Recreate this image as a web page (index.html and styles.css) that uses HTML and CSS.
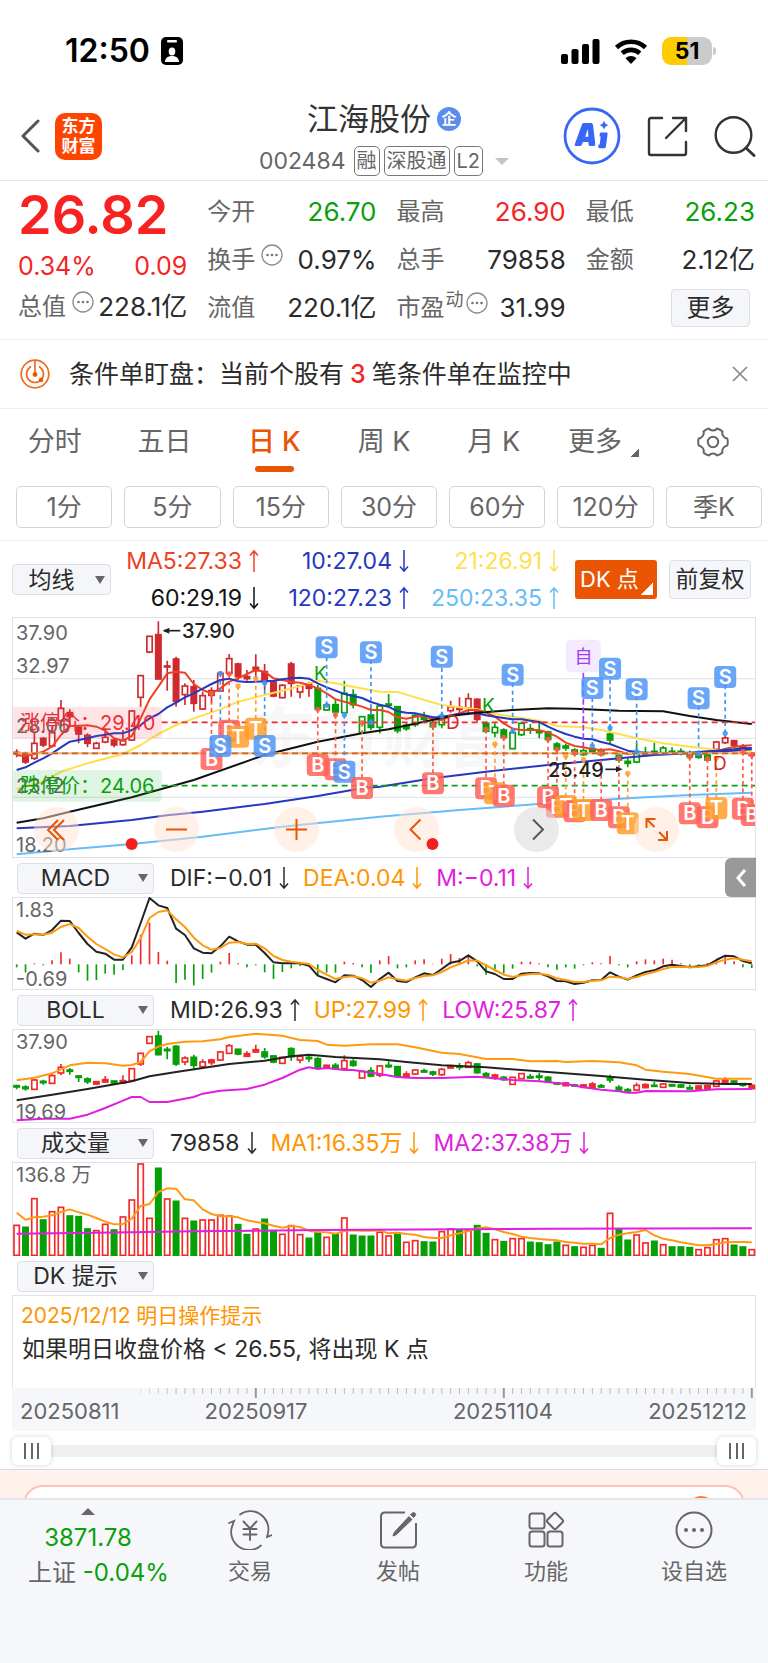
FILE: index.html
```html
<!DOCTYPE html>
<html lang="zh-CN">
<head>
<meta charset="utf-8">
<meta name="viewport" content="width=device-width, initial-scale=1">
<title>江海股份 002484</title>
<link rel="stylesheet" href="styles.css">
</head>
<body>
<svg class="defs" aria-hidden="true">
  <symbol id="down" viewBox="0 0 10 24"><path d="M5 1v21M1 17.500l4 4.500 4-4.500" fill="none" stroke="currentColor" stroke-width="1.500"/></symbol>
  <symbol id="up" viewBox="0 0 10 24"><path d="M5 23V2M1 6.500L5 2l4 4.500" fill="none" stroke="currentColor" stroke-width="1.500"/></symbol>
  <symbol id="info" viewBox="0 0 22 22"><circle cx="11" cy="11" r="10" fill="none" stroke="#8a8a8a" stroke-width="1.300"/><g fill="#777"><circle cx="6.500" cy="11" r="1.300"/><circle cx="11" cy="11" r="1.300"/><circle cx="15.500" cy="11" r="1.300"/></g></symbol>
</svg>

<div class="status">
  <span class="clock">12:50</span>
  <svg width="22" height="28" viewBox="0 0 22 28"><rect width="22" height="28" rx="5"/><rect x="6" y="3" width="10" height="2.500" rx="1.200" fill="#fff"/><ellipse cx="11" cy="14.500" rx="3.300" ry="4" fill="#fff"/><path d="M4 25c0-4 3-6 7-6s7 2 7 6z" fill="#fff"/></svg>
  <span class="grow"></span>
  <svg width="39" height="25" viewBox="0 0 39 25"><rect y="15" width="7" height="10" rx="2"/><rect x="10.500" y="10" width="7" height="15" rx="2"/><rect x="21" y="5" width="7" height="20" rx="2"/><rect x="31.500" width="7" height="25" rx="2"/></svg>
  <svg class="wifi" width="34" height="25" viewBox="0 0 34 25"><path d="M2.500 8.500a21 21 0 0 1 29 0M8.200 14.300a13 13 0 0 1 17.600 0" fill="none" stroke="#000" stroke-width="4.600"/><path d="M17 25l-5.500-5.700a8 8 0 0 1 11 0z"/></svg>
  <span class="battery">51</span>
</div>

<header class="head">
  <div class="head-left">
    <button class="icon-btn" aria-label="返回"><svg width="20" height="34" viewBox="0 0 20 34"><path d="M18 2L3 17l15 15" fill="none" stroke="#555" stroke-width="3" stroke-linecap="round" stroke-linejoin="round"/></svg></button>
    <a class="logo" href="#">东方<br>财富</a>
  </div>
  <div class="head-mid">
    <h1>江海股份<span class="corp">企</span></h1>
    <p class="code"><span class="num">002484</span><span class="tag">融</span><span class="tag">深股通</span><span class="tag">L2</span><i class="caret"></i></p>
  </div>
  <div class="head-right">
    <button class="icon-btn" aria-label="Ai"><svg width="58" height="58" viewBox="0 0 58 58"><circle cx="29" cy="29" r="27" fill="none" stroke="#3866f6" stroke-width="2.800"/><path d="M20.500 16h7.500q1.800 0 2 1.800l2.300 19.200q.2 2-1.800 2h-3.200q-1.500 0-1.700-1.500l-.3-2.500h-5.300l-1.200 2.800q-.5 1.200-2 1.200h-3.500q-2.200 0-1.400-2l7-19.500q.5-1.500 1.600-1.500zM24.800 22l-2.600 7.800h3.200z" fill="#3866f6"/><path d="M38 25.500h5.500q1.300 0 1.100 1.300l-1.700 13q-.2 1.400-1.600 1.400h-4.800q-1.400 0-1.200-1.400l.3-2.400h1.100l1-8h-1.200l.3-2.600q.1-1.300 1.200-1.300z" fill="#3866f6"/><path d="M41 13.500q1 4 4.500 4.500-3.500 1-4.500 4.500-1-3.500-4.500-4.500 3.500-.5 4.500-4.500z" fill="#3866f6"/></svg></button>
    <button class="icon-btn" aria-label="分享"><svg width="41" height="41" viewBox="0 0 41 41"><g fill="none" stroke="#333" stroke-width="2.400" stroke-linecap="round"><path d="M15 2H4q-2 0-2 2v33q0 2 2 2h33q2 0 2-2V26M26 2h13v13M38 3L19 22"/></g></svg></button>
    <button class="icon-btn" aria-label="搜索"><svg width="42" height="42" viewBox="0 0 42 42"><circle cx="19.500" cy="20" r="17.800" fill="none" stroke="#333" stroke-width="2.400"/><path d="M32 33l8 7.500" stroke="#333" stroke-width="2.800" stroke-linecap="round"/></svg></button>
  </div>
</header>

<section class="quote">
  <div class="col first">
    <strong class="price">26.82</strong>
    <div class="cell change red"><span>0.34%</span><span>0.09</span></div>
    <div class="cell third"><span class="lbl">总值<svg class="info"><use href="#info"/></svg></span><span>228.1亿</span></div>
  </div>
  <div class="col">
    <div class="cell"><span class="lbl">今开</span><span class="green">26.70</span></div>
    <div class="cell"><span class="lbl">换手<svg class="info"><use href="#info"/></svg></span><span>0.97%</span></div>
    <div class="cell"><span class="lbl">流值</span><span>220.1亿</span></div>
  </div>
  <div class="col">
    <div class="cell"><span class="lbl">最高</span><span class="red">26.90</span></div>
    <div class="cell"><span class="lbl">总手</span><span>79858</span></div>
    <div class="cell"><span class="lbl">市盈<small>动</small><svg class="info tight"><use href="#info"/></svg></span><span>31.99</span></div>
  </div>
  <div class="col">
    <div class="cell"><span class="lbl">最低</span><span class="green">26.23</span></div>
    <div class="cell"><span class="lbl">金额</span><span>2.12亿</span></div>
    <div class="cell end"><button class="soft more">更多</button></div>
  </div>
</section>

<section class="notice">
  <svg width="30" height="30" viewBox="0 0 30 30"><g fill="none" stroke="#f0691e" stroke-width="1.700"><circle cx="15" cy="15" r="13.800"/><path d="M11 7.500a8.500 8.500 0 1 0 8 0M15 1v14"/></g><circle cx="15" cy="15.500" r="2.400" fill="#ea5504"/><circle cx="21" cy="21" r="2.200" fill="#ea5504"/></svg>
  <p>条件单盯盘：当前个股有<b>3</b>笔条件单在监控中</p>
  <button class="icon-btn" aria-label="关闭"><svg width="16" height="16" viewBox="0 0 16 16"><path d="M1 1l14 14M15 1L1 15" stroke="#888" stroke-width="1.700"/></svg></button>
</section>

<nav class="tabs">
  <button>分时</button><button>五日</button><button class="on">日 K</button><button>周 K</button><button>月 K</button>
  <button>更多<i class="corner"></i></button>
  <button aria-label="设置"><svg width="32" height="32" viewBox="0 0 32 32"><g fill="none" stroke="#666" stroke-width="2"><path d="M12 2.500q1 2 4 2t4-2q3.500 1 5.500 3-.8 2.500.8 4.500 1.500 2.300 4 2.500 1 3.500 0 7-2.500.3-4 2.500-1.600 2.200-.8 4.500-2.200 2.200-5.500 3-1.500-2-4-2t-4 2q-3.500-.9-5.500-3 .8-2.500-.8-4.500-1.500-2.200-4-2.500-1-3.500 0-7 2.500-.3 4-2.500 1.600-2.200.8-4.500 2.300-2.200 5.500-3z" stroke-linejoin="round"/><circle cx="16" cy="16" r="5.200"/></g></svg></button>
</nav>
<div class="chips">
  <button>1分</button><button>5分</button><button>15分</button><button>30分</button><button>60分</button><button>120分</button><button>季K</button>
</div>

<section class="ma">
  <span class="pick small"><select aria-label="主图指标"><option>均线</option></select></span>
  <div class="ma-grid">
    <span class="c1">MA5:27.33<svg class="arr"><use href="#up"/></svg></span><span class="c2">10:27.04<svg class="arr"><use href="#down"/></svg></span><span class="c3">21:26.91<svg class="arr"><use href="#down"/></svg></span>
    <span class="c4">60:29.19<svg class="arr"><use href="#down"/></svg></span><span class="c2">120:27.23<svg class="arr"><use href="#up"/></svg></span><span class="c5">250:23.35<svg class="arr"><use href="#up"/></svg></span>
  </div>
  <button class="dk">DK 点</button>
  <button class="soft adj">前复权</button>
</section>

<main class="charts">
  <div class="plot">
    <svg id="kline" viewBox="0 0 744 241"></svg>
    <div class="tools">
      <button aria-label="最左"><svg viewBox="0 0 45 45"><path d="M24 13l-10 10 10 10M30 13L20 23l10 10"/></svg></button>
      <button aria-label="缩小"><svg viewBox="0 0 45 45"><path d="M12 22.500h21"/></svg></button>
      <button aria-label="放大"><svg viewBox="0 0 45 45"><path d="M12 22.500h21M22.500 12v21"/></svg></button>
      <button aria-label="左移"><svg viewBox="0 0 45 45"><path d="M26.500 12.500l-10 10 10 10"/><circle class="dot" cx="38.500" cy="37" r="6"/></svg></button>
      <button class="off" aria-label="右移"><svg viewBox="0 0 45 45"><path d="M19 12.500l10 10-10 10"/></svg></button>
      <button aria-label="全屏"><svg viewBox="0 0 45 45"><path d="M12.500 21v-9h9M12.500 12l8 8M24 33h9v-9M33 33l-8-8"/></svg></button>
    </div>
  </div>
  <div class="bar">
    <span class="pick"><select aria-label="指标一"><option>MACD</option></select></span>
    <span>DIF:−0.01<svg class="arr"><use href="#down"/></svg></span><span class="or">DEA:0.04<svg class="arr"><use href="#down"/></svg></span><span class="mg">M:−0.11<svg class="arr"><use href="#down"/></svg></span>
    <button class="fold" aria-label="展开"><svg width="12" height="20" viewBox="0 0 12 20"><path d="M10 2L3 10l7 8" fill="none" stroke="#fff" stroke-width="3"/></svg></button>
  </div>
  <svg id="macd" viewBox="0 0 744 93"></svg>
  <div class="bar">
    <span class="pick"><select aria-label="指标二"><option>BOLL</option></select></span>
    <span>MID:26.93<svg class="arr"><use href="#up"/></svg></span><span class="or">UP:27.99<svg class="arr"><use href="#up"/></svg></span><span class="mg">LOW:25.87<svg class="arr"><use href="#up"/></svg></span>
  </div>
  <svg id="boll" viewBox="0 0 744 94"></svg>
  <div class="bar">
    <span class="pick"><select aria-label="指标三"><option>成交量</option></select></span>
    <span>79858<svg class="arr"><use href="#down"/></svg></span><span class="or">MA1:16.35万<svg class="arr"><use href="#down"/></svg></span><span class="mg">MA2:37.38万<svg class="arr"><use href="#down"/></svg></span>
  </div>
  <svg id="vol" viewBox="0 0 744 94"></svg>
  <div class="bar">
    <span class="pick"><select aria-label="指标四"><option>DK 提示</option></select></span>
  </div>
  <div class="tip">
    <p class="or">2025/12/12 明日操作提示</p>
    <p>如果明日收盘价格 &lt; 26.55, 将出现 K 点</p>
  </div>
  <svg id="axis" viewBox="0 0 744 43"></svg>
  <div class="range">
    <input type="range" aria-label="起始日期" min="0" max="100" value="0">
    <input type="range" aria-label="结束日期" min="0" max="100" value="100">
  </div>
</main>

<div class="promo"><div class="promo-card"><i></i></div></div>

<footer class="dock">
  <a class="index" href="#"><i></i><span class="green">3871.78</span><span class="board">上证 <em>-0.04%</em></span></a>
  <a href="#"><svg width="44" height="40" viewBox="0 0 44 40"><g fill="none" stroke="#666" stroke-width="1.800" stroke-linecap="round"><path d="M12 4.500A18 18 0 0 1 40 23q-.5 2-1 4l5-2M33 35.500A18 18 0 0 1 5 14q.5-2 1-3L1 13"/><path d="M15.500 11.500l6.500 7 6.500-7M15.500 19h13M15.500 24.500h13M22 19v11" stroke-width="1.900"/></g></svg>交易</a>
  <a href="#"><svg width="40" height="40" viewBox="0 0 40 40"><path d="M27 2.500H7q-4 0-4 4v27q0 4 4 4h27q4 0 4-4V13" fill="none" stroke="#666" stroke-width="2"/><path d="M31 6.500l3 3L19 24q-2 1.500-4 2 .3-2.500 2-4.500zM34.500 3q1.200-1 2.500.2t.3 2.500L35.500 7.500l-3-3z" fill="#666" stroke="#666"/></svg>发帖</a>
  <a href="#"><svg width="40" height="40" viewBox="0 0 40 40"><g fill="none" stroke="#666" stroke-width="2"><rect x="3.500" y="3.500" width="15" height="15" rx="2.500"/><rect x="3.500" y="21.500" width="15" height="15" rx="2.500"/><rect x="21.500" y="21.500" width="15" height="15" rx="2.500"/><path d="M27.700 3.500q1.300-1.300 2.600 0l6.200 6.300q1.300 1.200 0 2.500l-6.200 6.200q-1.300 1.300-2.600 0l-6.200-6.200q-1.300-1.300 0-2.500z"/></g></svg>功能</a>
  <a href="#"><svg width="40" height="40" viewBox="0 0 40 40"><circle cx="20" cy="20" r="17.500" fill="none" stroke="#666" stroke-width="2"/><g fill="#666"><circle cx="12" cy="20" r="2"/><circle cx="20" cy="20" r="2"/><circle cx="28" cy="20" r="2"/></g></svg>设自选</a>
</footer>
<script src="charts.js"></script>
</body>
</html>
```

FILE: styles.css
```css
* { box-sizing: border-box; margin: 0; padding: 0; }
body { font-family: Inter, "Noto Sans CJK SC", sans-serif; font-size: 24px; line-height: 32px; color: #2b2b2b; background: #fff; }
button, select { font: inherit; color: inherit; border: 0; background: none; }
a { color: inherit; text-decoration: none; }
svg { display: block; flex: none; }
.defs { position: absolute; width: 0; height: 0; }
.grow { flex: 1; }
.red { color: #f32525; }
.green, .index em { color: #0aa00a; font-style: normal; }
.or { color: #ff9500; }
.mg { color: #e01ee0; }
.icon-btn { display: flex; }

.status { display: flex; align-items: center; height: 102px; padding: 0 56px 0 65px; }
.clock { font-size: 32px; font-weight: 600; color: #000; margin-right: 11px; }
.wifi { margin: 0 14px; }
.battery { position: relative; width: 50px; height: 28px; line-height: 28px; border-radius: 9px; text-align: center; font-size: 23px; font-weight: 700; color: #000; background: linear-gradient(90deg, #ffcc00 51%, #cbcbcb 51%); }
.battery::after { content: ""; position: absolute; right: -4px; top: 10px; width: 3px; height: 8px; border-radius: 0 3px 3px 0; background: #cbcbcb; }

.head { display: grid; grid-template-columns: 1fr auto 1fr; padding: 0 12px; height: 79px; border-bottom: 1px solid #e6e6e6; }
.head-left, .head-right { display: flex; align-items: center; padding-bottom: 10px; }
.head-left { gap: 15px; padding-left: 8px; }
.head-right { justify-content: flex-end; gap: 26px; }
.logo { width: 47px; height: 47px; border-radius: 10px; background: #ff4400; color: #fff; font-size: 17px; font-weight: 700; line-height: 20px; text-align: center; padding-top: 3px; }
.head-mid { text-align: center; color: #333; }
h1 { display: flex; align-items: center; justify-content: center; gap: 6px; font-size: 31px; line-height: 34px; font-weight: 400; }
.corp { width: 24px; height: 24px; border-radius: 50%; background: #5b8def; color: #fff; font-size: 15px; line-height: 23px; font-weight: 700; }
.code { display: flex; align-items: center; gap: 4px; margin-top: 10px; color: #666; font-size: 23px; line-height: 30px; }
.num { margin-right: 4px; }
.tag { height: 30px; border: 1px solid #777; border-radius: 5px; padding: 0 2px; font-size: 20px; line-height: 28px; }
.caret { margin-left: 8px; border: 7px solid transparent; border-top-color: #c4c4c4; border-bottom: 0; }

.quote { display: grid; grid-template-columns: repeat(4, 1fr); gap: 20px; padding: 7px 13px 7px 18px; border-bottom: 1px solid #efefef; }
.cell { display: flex; align-items: center; justify-content: space-between; height: 48px; white-space: nowrap; font-size: 26px; }
.change { font-size: 25px; }
.third { height: 34px; }
.end { justify-content: flex-end; padding-right: 5px; }
.lbl { display: flex; align-items: center; color: #666; font-size: 24px; }
.lbl small { font-size: 18px; margin: 0 1px 16px; }
.info { width: 22px; height: 22px; margin: 0 0 10px 6px; }
.tight { margin-left: 1px; }
.first .info { margin-right: -4px; }
.price { display: block; font-size: 54px; line-height: 54px; font-weight: 600; color: #f82222; }
.soft { border: 1px solid #dcdfe6; border-radius: 4px; background: #f5f6fa; white-space: nowrap; }
.more { width: 79px; height: 38px; font-size: 24px; line-height: 34px; }

.notice { display: flex; align-items: center; height: 69px; padding: 0 20px; border-bottom: 1px solid #efefef; font-size: 25px; }
.notice p { flex: 1; margin-left: 19px; white-space: nowrap; }
.notice b { color: #f32525; font-weight: 500; margin: 0 6px; }

.tabs { display: grid; grid-template-columns: repeat(7, 1fr); height: 66px; font-size: 27px; color: #666; }
.tabs button { position: relative; display: flex; align-items: center; justify-content: center; white-space: nowrap; }
.tabs .on { color: #ea5504; font-weight: 500; }
.tabs .on::after { content: ""; position: absolute; bottom: 3px; width: 39px; height: 6px; border-radius: 3px; background: #ea5504; }
.corner { align-self: flex-end; margin: 0 0 18px 9px; width: 8px; height: 8px; background: linear-gradient(135deg, transparent 50%, #666 50%); }
.chips { display: flex; gap: 12px; padding: 11px 6px 12px 16px; border-bottom: 1px solid #efefef; }
.chips button { flex: 1; height: 42px; border: 1px solid #d4d4d4; border-radius: 5px; font-size: 25px; line-height: 38px; color: #666; }

.ma { display: flex; align-items: center; height: 76px; padding: 0 17px 0 12px; }
.ma-grid { flex: 1; display: grid; grid-template-columns: 148px 1fr 150px; row-gap: 5px; justify-items: end; padding: 0 16px 0 0; font-size: 23px; }
.ma-grid span { display: flex; align-items: center; white-space: nowrap; }
.arr { width: 10px; height: 24px; margin-left: 7px; }
.c1 { color: #ef4123; } .c2 { color: #2438c0; } .c3 { color: #ffdf4d; } .c4 { color: #111; } .c5 { color: #66bdf7; }
.dk { position: relative; width: 82px; height: 39px; border-radius: 3px; background: linear-gradient(135deg, transparent 50%, #fff 50%) right 4px bottom 4px / 12px 12px no-repeat #ea5504; color: #fff; text-align: left; padding-left: 5px; white-space: nowrap; font-size: 22px; }
.adj { width: 82px; height: 39px; margin-left: 12px; font-size: 23px; }
.pick { position: relative; display: block; width: 137px; height: 31px; flex: none; }
.pick select { width: 100%; height: 100%; appearance: none; border: 1px solid #dcdfe6; border-radius: 4px; background: #f5f6fa; padding-right: 20px; text-align: center; text-align-last: center; font-size: 23px; line-height: 28px; }
.pick::after { content: ""; position: absolute; right: 6px; top: 12px; border: 5px solid transparent; border-top: 8px solid #666; border-bottom: 0; }
.small { width: 99px; }

.charts { padding: 0 12px; }
.charts > svg, .plot > svg { width: 100%; height: auto; overflow: hidden; }
.plot { position: relative; }
.tools { position: absolute; left: 3%; right: 10.4%; bottom: 6px; display: flex; justify-content: space-between; }
.tools button { width: 45px; height: 45px; border-radius: 50%; background: rgba(255, 226, 210, .5); }
.tools svg { fill: none; stroke: #ea5504; stroke-width: 2; overflow: visible; }
.tools .off { background: rgba(220, 220, 220, .6); }
.tools .off svg { stroke: #555; }
.tools .dot { fill: #f32020; stroke: none; }
.bar { display: flex; align-items: center; height: 39px; padding-left: 5px; font-size: 23px; gap: 16px; white-space: nowrap; }
.bar > span { display: flex; align-items: center; }
.bar > .pick { display: block; }
.bar > .or, .bar > .mg { margin-left: -2px; }
.fold { margin-left: auto; width: 31px; height: 39px; border-radius: 6px 0 0 6px; background: #999; display: flex; align-items: center; justify-content: center; }
.tip { height: 93px; border: 1px solid #e3e3e6; border-bottom: 0; padding: 4px 8px; }
.tip p { font-size: 23px; line-height: 35px; padding-left: 1px; }
.tip .or { font-size: 21px; line-height: 32px; padding-left: 0; }
.range { position: relative; height: 38px; }
.range::before { content: ""; position: absolute; left: 0; right: 0; top: 14px; height: 12px; background: #f0f0f2; }
.range input { position: absolute; left: 0; top: 5px; width: 100%; height: 30px; appearance: none; background: none; pointer-events: none; }
.range input::-webkit-slider-thumb { appearance: none; width: 39px; height: 28px; border-radius: 6px; box-shadow: 0 0 5px rgba(0, 0, 0, .18); pointer-events: auto; background: linear-gradient(#666, #666) 12px 6px / 2px 16px no-repeat, linear-gradient(#666, #666) 19px 6px / 2px 16px no-repeat, linear-gradient(#666, #666) 25px 6px / 2px 16px no-repeat #fff; }

.promo { height: 29px; padding: 15px 23px 0; border-top: 1px solid #d9d9de; background: #fff1ec; overflow: hidden; }
.promo-card { position: relative; height: 60px; border: 2px solid #ffc0b6; border-radius: 20px; background: #fff; }
.promo-card i { position: absolute; right: 28px; top: 9px; width: 28px; height: 28px; border-radius: 50%; background: #ff7d2e; }

.dock { display: grid; grid-template-columns: 176px repeat(4, 1fr); height: 165px; padding-top: 8px; border-top: 2px solid #e4e6ea; background: #f6f7fa; color: #666; }
.dock a { display: flex; flex-direction: column; align-items: center; font-size: 22px; gap: 5px; white-space: nowrap; }
.dock svg { margin-top: 2px; }
.dock .index { font-size: 24px; gap: 0; }
.index i { border: 7px solid transparent; border-top: 0; border-bottom: 7px solid #666; }
.index .green { margin: 7px 0 3px; }
.board { align-self: flex-start; padding-left: 28px; }

.grey { fill: #666; }
```

FILE: charts.js
```js
const N = 84;
const RED = '#cf2a2f', BRIGHT = '#f22a2a', GREEN = '#06a006';
const X = i => 14 + 26.57 * i;

// Draws a polyline through sparse index:value pairs.
const line = (pairs, color, w = 6) => {
  const pts = pairs.trim().split(/\s+/).map(p => p.split(':').map(Number));
  return `<polyline points="${pts.map(([i, y]) => X(i) + ',' + y).join(' ')}" fill="none" stroke="${color}" stroke-width="${w}" stroke-linejoin="round"/>`;
};
const dense = (list, color, w) => line(list.trim().split(/\s+/).map((v, i) => i + ':' + v).join(' '), color, w);

// Each candle: kind high top bottom low. Upper-case kinds are filled.
const candles = (text, red) => text.trim().split('|').map((row, i) => {
  const [k, h, t, b, l] = row.trim().split(/\s+/).map((v, n) => n ? +v : v);
  const c = k.toLowerCase() === 'r' ? red : GREEN, x = X(i), solid = k === k.toUpperCase();
  return `<path d="M${x} ${h}V${t}M${x} ${b}V${l}" stroke="${c}" stroke-width="5"/>` +
    `<rect x="${x - 8}" y="${t}" width="16" height="${Math.max(b - t, 3)}" fill="${solid ? c : '#fff'}" stroke="${c}" stroke-width="5"/>`;
}).join('');

const scaled = (top, body) => `<g transform="scale(.33333) translate(0 ${-top})">${body}</g>`;
const frame = h => `<rect x=".5" y=".5" width="743" height="${h - 1}" fill="none" stroke="#e0e1e8"/>`;
const text = (x, y, s, size = 20, extra = 'class="grey"') => `<text x="${x}" y="${y}" font-size="${size}" ${extra}>${s}</text>`;
const put = (id, body) => { document.getElementById(id).innerHTML = body; };

/* K line */
const kData = `R 418 427 432 442|R 425 432 456 462|r 366 400 445 450|R 382 385 405 412|r 350 368 408 412|r 270 295 332 345|R 298 308 320 350|R 345 352 372 400|R 370 376 400 412|r 395 400 415 417|r 355 382 396 400|R 385 390 405 412|r 360 392 404 408|r 300 303 390 392|r 194 197 262 290|r 77 79 126 130|R 34 74 207 208|R 152 168 170 242|R 140 147 274 290|r 220 228 254 285|R 210 230 280 305|r 245 257 297 300|R 232 242 256 280|r 185 190 243 246|r 132 146 190 195|R 158 162 200 210|R 180 200 206 212|R 133 172 182 215|R 162 185 215 240|R 212 216 258 262|r 222 226 263 265|R 155 162 220 260|r 225 228 246 265|R 215 222 235 260|G 225 235 297 300|g 280 285 300 303|G 268 284 306 318|g 212 250 308 310|G 238 254 284 295|g 318 320 368 370|G 290 315 352 360|g 285 288 352 370|G 252 282 286 292|G 288 290 362 370|G 340 346 356 362|g 312 316 344 350|G 305 322 328 340|G 320 338 350 360|g 305 318 344 355|r 272 290 302 308|R 262 292 298 310|r 250 266 294 315|R 265 268 328 335|G 335 340 364 370|g 340 352 368 382|G 355 360 382 388|g 362 368 416 418|g 335 340 374 378|G 342 356 360 372|G 335 364 368 385|G 362 366 388 396|G 396 402 418 428|G 402 408 414 422|G 415 420 432 438|g 415 422 434 438|G 412 416 426 428|G 415 420 434 438|G 345 372 390 400|G 428 436 450 458|G 445 454 460 472|g 400 430 456 460|G 410 428 434 440|G 398 424 430 436|g 408 414 428 436|G 412 424 428 434|G 415 424 430 436|G 422 430 440 448|G 430 434 442 446|G 425 430 450 455|r 392 396 418 425|r 375 384 398 402|R 390 392 406 410|R 402 410 430 432|R 425 430 436 448`;

const ma5 = `436 438 432 425 410 375 348 347 346 350 362 385 392 378 325 268 230 190 185 188 222 240 250 235 215 205 192 180 185 205 210 216 218 225 235 250 268 275 282 290 300 300 306 322 326 320 318 328 330 318 310 300 300 308 320 340 356 360 360 360 368 380 398 408 412 418 420 418 424 432 428 432 430 432 430 428 430 432 430 425 416 411 407 406`;
const ma10 = `480 472 458 445 430 412 395 390 385 378 374 370 370 360 345 325 312 292 278 262 250 236 222 210 206 214 216 215 214 212 208 205 203 206 220 232 242 252 258 264 276 284 290 304 308 310 316 322 322 316 312 310 310 316 320 324 328 328 332 336 350 362 372 380 386 388 396 402 412 422 426 428 428 430 430 428 428 426 424 422 420 418 415 414`;

const cut = (y, c, x0 = 449) => `<path d="M${x0} ${y}H2232" stroke="${c}" stroke-width="5" stroke-dasharray="18 12"/>`;
const kinds = { S: ['#4f97f8', '#4093f5'], B: ['#ff6157', '#ff5a45'], T: ['#ff9e2c', '#ff9e2c'] };
const marks = `B22:250:447 B24:192:362 T25:228:380 T27:205:356 S23:190:408 S28:218:408 S35:286:112 B34:298:465 B36:314:478 S37:314:485 S40:338:127 B39:338:534 S48:318:140 B47:346:520 B53:358:535 T54:402:550 B55:382:557 S56:364:194 B60:388:562 B61:418:590 T62:438:588 B63:428:604 T64:448:600 S65:408:234 B66:428:600 S67:354:176 B68:444:622 T69:490:640 S70:425:238 B76:440:610 S77:432:265 B78:446:622 T79:445:595 S80:370:201 B82:425:596 B83:435:615`
  .split(' ').map(m => { const [a, d, y] = m.split(':'); return { k: a[0], i: +a.slice(1), d: +d, y: +y }; });
const stems = marks.map(({ k, i, d, y }) => `<path d="M${X(i)} ${d}V${y}" stroke="${kinds[k][1]}" stroke-width="5" stroke-dasharray="12 10"/><circle cx="${X(i)}" cy="${d}" r="8" fill="${kinds[k][1]}" opacity=".85"/>`).join('');
const badges = marks.map(({ k, i, y }) => {
  const x = X(i) / 3, v = (y - 21) / 3;
  return `<rect x="${x - 11}" y="${v - 11}" width="22" height="22" rx="4" fill="${kinds[k][0]}" opacity=".85"/><text x="${x}" y="${v + 7}" font-size="20" font-weight="600" fill="#fff" text-anchor="middle">${k}</text>`;
}).join('');

put('kline',
  text(238, 145, '东方财富', 66, 'fill="#f7f7f8" font-weight="700"') +
  scaled(21,
    [206, 385, 562].map(y => `<path d="M0 ${y}H2232" stroke="#e4e6ee" stroke-width="4"/>`).join('') +
    candles(kData, RED) +
    line('0:538 1:528 3:515 5:485 8:460 12:432 14:405 16:372 18:345 20:325 23:298 25:275 28:255 30:242 32:228 34:212 36:220 38:230 41:245 43:246 44:254 46:270 48:285 50:292 52:298 54:312 57:324 59:332 61:348 64:352 66:360 68:372 70:385 73:400 76:410 78:416 79:420 81:424 83:422', '#ffdf4d') +
    dense(ma5, '#ef4123') + dense(ma10, '#2438c0') +
    line('0:638 3:625 6:605 13:562 20:510 28:435 34:395 39:370 42:358 46:335 49:318 52:308 56:300 60:295 63:296 68:302 73:304 76:318 79:330 83:342', '#111') +
    line('0:655 6:648 13:630 17:616 21:605 28:582 34:558 39:535 41:530 47:505 53:485 60:465 66:450 72:435 76:430 80:424 83:418', '#2438c0') +
    line('0:733 6:718 13:702 21:680 30:650 41:620 50:600 60:580 70:563 76:555 83:548', '#66bdf7') +
    '<rect x="0" y="290" width="449" height="95" rx="10" fill="#f8404d" opacity=".14"/><rect x="0" y="480" width="449" height="95" rx="10" fill="#20b030" opacity=".14"/>' +
    cut(337, '#f02a30') + cut(527, '#0aa01a') +
    '<path d="M0 430H2232" stroke="#f0b27a" stroke-width="6"/>' + cut(430, '#c8641c', 0) +
    stems +
    '<path d="M1714 188V410" stroke="#a33df5" stroke-width="5" stroke-dasharray="18 8"/><rect x="1662" y="89" width="104" height="98" rx="14" fill="#f3eafe"/>' +
    '<path d="M505 62H456" stroke="#222" stroke-width="5"/><path d="M452 62l20-9v18zM1832 478l-20-9v18z" fill="#222"/><path d="M1780 478H1820" stroke="#222" stroke-width="5"/>' +
    '<circle cx="359" cy="702" r="18" fill="#f32020"/>') +
  badges +
  text(571.5, 46, '自', 18, 'fill="#a33df5" text-anchor="middle"') +
  text(4, 23, '37.90') + text(4, 56, '32.97') + text(4, 116, '28.06') + text(4, 176, '23.12') + text(4, 235, '18.20') +
  text(8, 113, '涨停价：29.40', 20, 'fill="#f32a35"') + text(8, 176, '跌停价：24.06', 20, 'fill="#08a010"') +
  text(170, 21, '37.90', 20, 'fill="#222" font-weight="500"') + text(536, 160, '25.49', 20, 'fill="#222" font-weight="500"') +
  text(302, 63, 'K', 19, 'fill="#06a006"') + text(470, 95, 'K', 19, 'fill="#06a006"') +
  text(434, 112, 'D', 19, 'fill="#cf2a2f"') + text(701, 153, 'D', 19, 'fill="#cf2a2f"') + frame(241));

/* MACD: values above 329 on screen rise from the zero line, the rest hang below. */
const hist = '338 353 326 332 317 293 312 353 378 376 357 360 346 302 240 204 292 318 385 375 392 373 354 321 295 326 338 332 353 373 352 341 334 333 363 354 354 321 325 338 355 317 304 341 338 317 314 327 312 298 310 302 335 360 350 356 342 321 321 326 338 345 338 342 332 323 326 304 332 338 320 314 317 312 315 326 336 332 325 316 306 320 338 340'.split(' ').map(Number);
put('macd', frame(93) + scaled(127,
  hist.map((v, i) => `<path d="M${X(i)} 329V${v}" stroke="${v < 329 ? BRIGHT : GREEN}" stroke-width="5"/>`).join('') +
  dense('233 252 237 241 226 198 199 235 268 291 297 315 315 278 205 130 152 160 222 241 281 294 296 275 246 260 270 270 295 323 326 326 326 333 363 373 383 362 363 376 397 373 354 379 382 368 356 361 343 324 319 302 320 350 358 373 373 357 355 356 365 379 380 388 384 377 376 353 366 375 362 352 347 335 330 334 338 335 332 316 303 305 319 326', '#222', 6) +
  dense('229 240 239 240 234 217 208 220 246 268 283 299 308 292 250 190 172 167 194 217 249 272 285 280 264 262 268 267 281 304 316 321 324 328 346 360 373 367 365 371 384 378 368 374 378 370 364 362 352 338 328 317 318 332 346 360 367 362 358 357 361 371 376 382 382 378 377 366 368 373 367 358 352 343 337 336 338 337 334 323 315 311 315 320', '#ff9a10', 6)) +
  text(4, 20, '1.83') + text(4, 89, '-0.69'));

/* BOLL */
put('boll', frame(94) + scaled(523,
  candles(`G 690 693 697 704|G 692 697 702 708|r 672 676 704 706|G 675 680 684 690|r 656 663 686 688|r 628 638 655 662|G 640 646 650 660|G 662 664 668 682|G 668 673 681 688|R 680 681 688 690|R 664 675 682 684|G 678 679 685 687|R 662 678 685 686|r 640 642 678 680|r 594 596 628 634|r 545 546 566 568|G 528 544 600 602|G 576 584 588 614|G 571 575 628 634|r 605 610 622 632|G 600 608 632 642|r 614 622 636 638|R 612 616 624 632|r 590 592 616 618|r 568 573 596 598|G 582 584 598 602|R 590 597 605 606|R 570 585 592 594|G 580 592 606 612|G 602 604 622 626|r 606 608 626 627|G 578 582 606 618|r 600 605 616 626|G 604 608 612 622|G 608 612 640 642|R 630 632 640 641|G 625 632 642 645|r 602 618 642 646|G 614 620 632 636|r 648 650 670 671|G 638 648 664 668|r 632 634 662 668|G 620 632 636 640|G 634 636 665 668|R 650 658 668 670|r 645 646 658 660|G 642 648 652 654|G 648 652 658 664|r 640 644 660 664|R 630 633 640 642|G 625 634 638 646|r 618 624 638 640|G 625 628 654 657|G 652 657 666 668|R 657 661 671 675|G 664 668 675 678|r 666 668 689 690|r 655 657 672 673|G 658 666 670 671|G 655 664 668 678|G 665 668 680 682|G 682 685 688 692|R 682 685 693 694|G 688 691 694 696|R 688 691 698 699|R 682 688 699 700|G 688 693 697 699|G 660 670 676 684|G 692 698 706 708|G 700 705 709 711|r 684 692 706 710|R 686 690 699 700|G 682 692 695 697|r 686 688 698 699|G 689 690 694 695|G 689 691 697 700|G 690 699 703 704|R 692 694 704 706|R 690 693 703 704|r 677 679 695 697|R 668 675 686 688|G 678 679 685 688|G 685 687 692 696|R 688 692 702 704`, BRIGHT) +
  line('0:677 2:669 4:656 6:632 8:624 10:626 12:633 13:631 14:622 15:590 16:576 17:568 19:561 21:560 23:554 24:547 27:537 30:543 32:556 34:559 35:570 37:573 40:569 43:569 45:578 48:594 50:598 53:613 56:613 58:620 61:619 62:622 65:619 68:623 70:632 71:645 73:651 76:658 79:672 83:672', '#ff9a10', 6) +
  line('0:737 4:720 8:703 13:680 15:665 18:652 24:628 28:618 31:605 33:600 36:607 41:614 44:622 48:632 53:638 60:652 66:664 71:675 76:685 80:688 83:688', '#222', 6) +
  line('0:797 3:792 6:792 8:780 10:760 12:738 13:727 14:727 15:742 17:742 20:727 21:717 23:708 26:703 28:690 30:670 32:645 33:638 34:643 35:640 37:646 38:646 41:658 43:667 45:670 48:670 52:666 56:676 59:680 62:688 64:698 66:705 68:710 69:714 70:714 71:709 76:710 79:704 83:703', '#e01ee0', 6)) +
  text(4, 20, '37.90') + text(4, 90, '19.69'));

/* Volume */
const vols = 'r268 g274 r188 g252 r227 r214 g240 g242 g279 r284 r265 g282 r243 r192 r84 r247 g97 r189 g196 r247 g256 r252 r252 r238 r240 g266 g296 r279 g250 g284 r295 r269 r296 g307 g289 r304 g296 r246 g298 g301 g301 r289 r300 g293 r319 r314 g318 g319 r287 r279 g284 r284 g269 g293 r311 g317 r308 r308 g319 g321 g327 g319 r328 g333 r334 r328 g338 r232 g280 g313 r297 r321 g316 r326 g333 g333 g335 r341 r335 r311 r308 g328 g333 r341'.split(' ');
put('vol', frame(94) + scaled(80,
  vols.map((v, i) => `<rect x="${X(i) - 8}" y="${+v.slice(1) + 2}" width="16" height="${358 - v.slice(1)}" fill="${v[0] === 'r' ? '#fff' : GREEN}" stroke="${v[0] === 'r' ? BRIGHT : GREEN}" stroke-width="5"/>`).join('') +
  dense('232 253 246 244 240 230 222 231 238 248 259 267 266 250 212 206 170 159 160 192 195 222 236 243 243 246 255 260 264 271 277 272 275 286 290 291 295 287 285 286 286 285 294 292 296 298 305 308 308 300 294 287 279 276 282 290 296 304 308 311 313 315 320 322 325 325 327 308 298 294 290 284 300 310 315 321 325 330 330 326 321 320 320 321', '#ff9a10', 6) +
  line('0:295 13:291 20:288 34:284 60:280 83:279', '#e01ee0', 6)) +
  text(4, 20, '136.8 万'));

/* Time axis */
let ticks = '<rect width="744" height="43" fill="#f6f7fa"/>';
for (let i = 14; i < N; i++) {
  const major = [27, 55, 83].includes(i);
  ticks += `<path d="M${X(i) / 3} 0V${major ? 10 : 6}" stroke="${major ? '#999' : '#bbb'}" stroke-width="${major ? 2 : 1}" opacity="${i < 18 ? (i - 12) / 6 : 1}"/>`;
}
put('axis', ticks + text(8, 31, '20250811', 22) +
  text(244, 31, '20250917', 22, 'class="grey" text-anchor="middle"') +
  text(491, 31, '20251104', 22, 'class="grey" text-anchor="middle"') +
  text(735, 31, '20251212', 22, 'class="grey" text-anchor="end"'));
```
